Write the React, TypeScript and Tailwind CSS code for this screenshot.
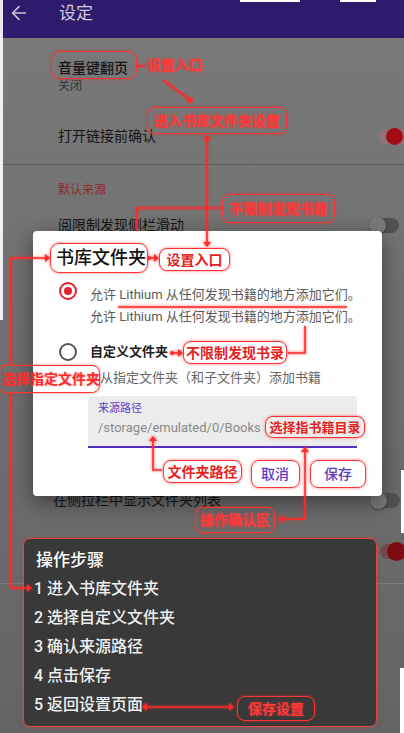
import React from "react";
import { ArrowLeft } from "lucide-react";

const tagBase =
  "absolute flex items-center justify-center rounded-[8px] border-[1.5px] border-[#ff3434] font-bold leading-none whitespace-nowrap shadow-[0_0_3px_rgba(255,40,40,0.65)]";
const tagDark = "text-[#ff3838] [text-shadow:0_0_3px_rgba(255,50,50,0.75)]";
const tagLight = "bg-white text-[#e61f1f]";

type Dir = "up" | "down" | "left" | "right";
function Arrow({ x, y, dir }: { x: number; y: number; dir: Dir }) {
  const s = 5;
  let pts = "";
  if (dir === "up") pts = `${x},${y} ${x - s * 0.8},${y + s} ${x + s * 0.8},${y + s}`;
  if (dir === "down") pts = `${x},${y} ${x - s * 0.8},${y - s} ${x + s * 0.8},${y - s}`;
  if (dir === "left") pts = `${x},${y} ${x + s},${y - s * 0.8} ${x + s},${y + s * 0.8}`;
  if (dir === "right") pts = `${x},${y} ${x - s},${y - s * 0.8} ${x - s},${y + s * 0.8}`;
  return <polygon points={pts} fill="#ff2a2a" stroke="none" />;
}

function ToggleOff() {
  return (
    <div className="relative h-[15px] w-[29px] rounded-full bg-[#525252]">
      <div className="absolute left-[-1px] top-[-1px] h-[17px] w-[17px] rounded-full bg-[#7b7b7b] shadow-[0_1px_2px_rgba(0,0,0,0.4)]" />
    </div>
  );
}

export default function App() {
  return (
    <div className="relative w-[404px] h-[733px] overflow-hidden bg-gradient-to-b from-[#7a7a7a] via-[#6f6f6f] to-[#646464] font-['Roboto','Noto_Sans_CJK_SC',sans-serif]">
      {/* App bar */}
      <header className="h-[38px] bg-[#2e1b6c] pl-[8px]">
        <div className="flex h-[26px] items-center">
          <ArrowLeft size={22} strokeWidth={1.8} className="text-[#c9c6d8]" />
          <span className="ml-[29px] text-[17px] leading-none text-[#cfccda]">设定</span>
        </div>
      </header>

      {/* Settings list */}
      <div className="pl-[58px]">
        <div className="pt-[20px]">
          <div className="text-[14px] leading-[20px] font-medium text-[#151515]">音量键翻页</div>
          <div className="text-[12px] leading-[16px] text-[#363636]">关闭</div>
        </div>
        <div className="mt-[32px] flex h-[20px] items-center justify-between">
          <span className="text-[14px] leading-[20px] text-[#151515]">打开链接前确认</span>
          <div className="relative mr-[-10px] h-[15px] w-[36px] rounded-full bg-[#8e7676]">
            <div className="absolute left-[8px] top-[-1px] h-[17px] w-[17px] rounded-full bg-[#a50b15]" />
          </div>
        </div>
      </div>
      <div className="mt-[18px] h-px bg-[#5d5d5d]" />
      <div className="pl-[58px] pt-[17px] text-[12px] leading-[16px] text-[#8f2a2c]">默认来源</div>
      <div className="mt-[17px] flex h-[20px] items-center justify-between pl-[58px] pr-[5px]">
        <span className="text-[14px] leading-[20px] text-[#151515]">阅限制发现侧栏滑动</span>
        <ToggleOff />
      </div>
      <div className="h-[255px]" />
      <div className="flex h-[20px] items-center justify-between pl-[53px] pr-[4px]">
        <span className="text-[14px] leading-[20px] text-[#151515]">在侧拉栏中显示文件夹列表</span>
        <ToggleOff />
      </div>
      <div className="mt-[31px] flex h-[20px] items-center justify-end">
        <div className="relative mr-[-12px] h-[15px] w-[36px] rounded-full bg-[#6e4a4a]">
          <div className="absolute left-[7px] top-[-2px] h-[19px] w-[19px] rounded-full bg-[#7c0a10]" />
        </div>
      </div>
      <div className="mt-[22px] h-px bg-[#7c7c7c]" />

      {/* edge artifacts */}
      <div className="absolute left-0 top-0 h-[320px] w-[3px] bg-white/90" />
      <div className="absolute left-[240px] top-0 h-[2px] w-[60px] bg-white" />
      <div className="absolute left-[340px] top-0 h-[2px] w-[36px] bg-white" />
      <div className="absolute right-0 top-[470px] h-[63px] w-[3px] bg-white" />
      <div className="absolute right-0 top-[668px] h-[65px] w-[4px] bg-white" />

      {/* Dialog */}
      <div className="absolute left-[33px] top-[231px] w-[349px] rounded-[4px] bg-white shadow-[0_6px_22px_rgba(0,0,0,0.45)]">
        <div className="pl-[23px] pt-[15px] text-[18px] leading-[24px] font-medium text-[#111111]">书库文件夹</div>
        <div className="mt-[14px] flex">
          <div className="ml-[26px] mt-[-2px] flex h-[18px] w-[18px] shrink-0 items-center justify-center rounded-full border-[2.5px] border-[#e4222e]">
            <div className="h-[8px] w-[8px] rounded-full bg-[#e4222e]" />
          </div>
          <div className="ml-[13px] text-[13px] leading-[22px] text-[#5b5b5b] whitespace-nowrap">
            <div>允许 Lithium 从任何发现书籍的地方添加它们。</div>
            <div>允许 Lithium 从任何发现书籍的地方添加它们。</div>
          </div>
        </div>
        <div className="mt-[13px] flex h-[22px] items-center">
          <div className="ml-[26px] h-[18px] w-[18px] shrink-0 rounded-full border-[2px] border-[#555555]" />
          <span className="ml-[13px] text-[13px] leading-[22px] font-bold text-[#222222]">自定义文件夹</span>
        </div>
        <div className="mt-[4px] pl-[67px] text-[13px] leading-[22px] text-[#666666] whitespace-nowrap">从指定文件夹（和子文件夹）添加书籍</div>
        <div className="ml-[55px] mt-[7px] h-[52px] w-[269px] rounded-t-[4px] border-b-[2px] border-[#5530c0] bg-[#ececec] pl-[10px] pt-[6px]">
          <div className="text-[11px] leading-[14px] text-[#5a3cc2]">来源路径</div>
          <div className="mt-[3px] text-[13px] leading-[18px] text-[#8a8a8a]">/storage/emulated/0/Books</div>
        </div>
        <div className="mt-[12px] flex justify-end gap-[15px] pr-[20px] pb-[8px]">
          <button className="h-[28px] px-[10px] text-[14px] font-medium text-[#5a3bbf]">取消</button>
          <button className="h-[28px] px-[10px] text-[14px] font-medium text-[#5a3bbf]">保存</button>
        </div>
      </div>

      {/* Steps card */}
      <div className="absolute left-[23px] top-[538px] h-[189px] w-[354px] rounded-[7px] border border-[#e04848] bg-[#393939] pl-[12px] pt-[9px] shadow-[0_0_4px_rgba(230,60,60,0.5)]">
        <div className="text-[17px] leading-[24px] font-medium text-white">操作步骤</div>
        <div className="ml-[-2px] mt-[2px] text-[16px] leading-[29px] font-medium text-[#efefef]">
          <div>1 进入书库文件夹</div>
          <div>2 选择自定义文件夹</div>
          <div>3 确认来源路径</div>
          <div>4 点击保存</div>
          <div>5 返回设置页面</div>
        </div>
      </div>

      {/* Annotation lines */}
      <svg
        className="pointer-events-none absolute left-0 top-0 drop-shadow-[0_0_1.5px_rgba(255,40,40,0.9)]"
        width={404}
        height={733}
        viewBox="0 0 404 733"
      >
        <g stroke="#ff2a2a" strokeWidth={1.6} fill="none">
          <line x1={137} y1={66} x2={146} y2={66} />
          <line x1={163} y1={80} x2={189} y2={99} />
          <line x1={207} y1={139} x2={207} y2={243} />
          <polyline points="222,208 137,208 137,231" />
          <line x1={148} y1={258} x2={156} y2={258} />
          <polyline points="46,258 11,258 11,365" />
          <polyline points="11,393 11,588 28,588" />
          <line x1={118} y1={307} x2={347} y2={307} />
          <polyline points="305,326 305,353 288,353" />
          <line x1={172} y1={353} x2={180} y2={353} />
          <polyline points="153,440 153,470 162,470" />
          <polyline points="305,451 305,519 282,519" />
          <line x1={146} y1={707} x2={230} y2={707} />
        </g>
        <circle cx={190} cy={100} r={2.6} fill="#ff2a2a" />
        <circle cx={149} cy={258} r={2} fill="#ff2a2a" />
        <circle cx={172} cy={353} r={2} fill="#ff2a2a" />
        <Arrow x={207} y={135} dir="up" />
        <Arrow x={207} y={247} dir="down" />
        <Arrow x={159} y={258} dir="right" />
        <Arrow x={50} y={258} dir="right" />
        <Arrow x={32} y={588} dir="right" />
        <Arrow x={183} y={353} dir="right" />
        <Arrow x={153} y={436} dir="up" />
        <Arrow x={305} y={447} dir="up" />
        <Arrow x={278} y={519} dir="left" />
        <Arrow x={142} y={707} dir="left" />
        <Arrow x={234} y={707} dir="right" />
      </svg>

      {/* Annotation tags */}
      <div className={tagBase + " left-[51px] top-[51px] h-[28px] w-[86px] rounded-[9px]"} />
      <div className={"absolute left-[147px] top-[57px] text-[14px] leading-[16px] font-bold whitespace-nowrap " + tagDark}>设置入口</div>
      <div className={tagBase + " " + tagDark + " left-[147px] top-[107px] h-[27px] w-[140px] text-[14px]"}>进入书库文件夹设置</div>
      <div className={tagBase + " " + tagDark + " left-[222px] top-[194px] h-[29px] w-[113px] text-[14px]"}>不限制发现书籍</div>
      <div className={tagBase + " left-[50px] top-[243px] h-[30px] w-[98px] rounded-[9px]"} />
      <div className={tagBase + " " + tagLight + " left-[159px] top-[248px] h-[23px] w-[71px] text-[14px]"}>设置入口</div>
      <div className={tagBase + " " + tagLight + " left-[183px] top-[341px] h-[23px] w-[104px] text-[14px]"}>不限制发现书录</div>
      <div className={tagBase + " left-[-2px] top-[365px] h-[28px] w-[102px] text-[14px] text-[#ff2a2a] [text-shadow:0_0_2px_rgba(255,60,60,0.5)]"}>
        <span className="pl-[4px]">选择指定文件夹</span>
      </div>
      <div className={tagBase + " left-[265px] top-[416px] h-[22px] w-[100px] bg-[#ececec] text-[13px] text-[#e61f1f]"}>选择指书籍目录</div>
      <div className={tagBase + " " + tagLight + " left-[163px] top-[460px] h-[23px] w-[79px] text-[14px]"}>文件夹路径</div>
      <div className={tagBase + " left-[251px] top-[460px] h-[28px] w-[49px]"} />
      <div className={tagBase + " left-[310px] top-[460px] h-[28px] w-[56px]"} />
      <div className={tagBase + " " + tagDark + " left-[195px] top-[507px] h-[26px] w-[80px] text-[14px]"}>操作确认区</div>
      <div className={tagBase + " " + tagDark + " left-[237px] top-[696px] h-[25px] w-[78px] text-[14px]"}>保存设置</div>
    </div>
  );
}
